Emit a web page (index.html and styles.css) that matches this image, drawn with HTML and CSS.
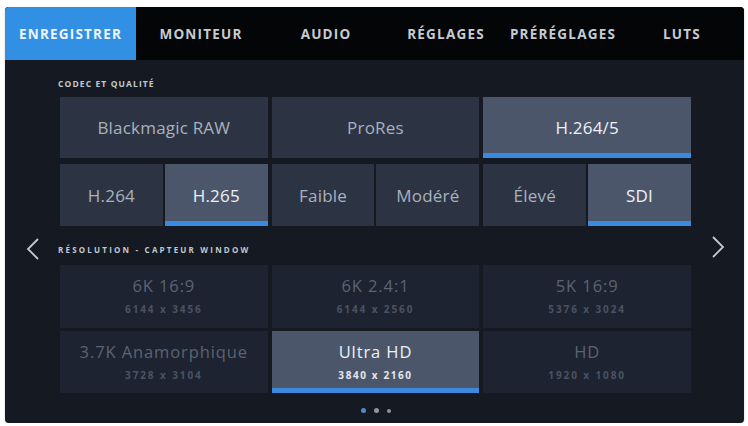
FILE: index.html
```html
<!DOCTYPE html>
<html lang="fr">
<head>
<meta charset="utf-8">
<title>Enregistrer</title>
<link rel="stylesheet" href="styles.css">
</head>
<body>
<div class="screen">
  <nav class="tabs">
    <div class="tab active w1">ENREGISTRER</div>
    <div class="tab w2">MONITEUR</div>
    <div class="tab w3">AUDIO</div>
    <div class="tab w4">RÉGLAGES</div>
    <div class="tab w5">PRÉRÉGLAGES</div>
    <div class="tab w6">LUTS</div>
  </nav>
  <div class="body">
    <div class="side side-left">
      <svg class="chev" width="16" height="22" viewBox="0 0 16 22"><polyline points="13,1 3,11 13,21" fill="none" stroke="#c4c9d0" stroke-width="1.8"/></svg>
    </div>
    <main class="main">
      <div class="label">CODEC ET QUALITÉ</div>
      <div class="row3 codec">
        <div class="btn">Blackmagic RAW</div>
        <div class="btn">ProRes</div>
        <div class="btn sel">H.264/5</div>
      </div>
      <div class="row3 opts">
        <div class="pair"><div class="btn">H.264</div><div class="btn sel">H.265</div></div>
        <div class="pair"><div class="btn">Faible</div><div class="btn">Modéré</div></div>
        <div class="pair"><div class="btn">Élevé</div><div class="btn sel">SDI</div></div>
      </div>
      <div class="label label2">RÉSOLUTION - CAPTEUR WINDOW</div>
      <div class="res-grid">
        <div class="res"><span class="rt">6K 16:9</span><span class="rs">6144 x 3456</span></div>
        <div class="res"><span class="rt">6K 2.4:1</span><span class="rs">6144 x 2560</span></div>
        <div class="res"><span class="rt">5K 16:9</span><span class="rs">5376 x 3024</span></div>
        <div class="res"><span class="rt">3.7K Anamorphique</span><span class="rs">3728 x 3104</span></div>
        <div class="res sel"><span class="rt">Ultra HD</span><span class="rs">3840 x 2160</span></div>
        <div class="res"><span class="rt">HD</span><span class="rs">1920 x 1080</span></div>
      </div>
      <div class="dots">
        <span class="dot on"></span><span class="dot"></span><span class="dot small"></span>
      </div>
    </main>
    <div class="side side-right">
      <svg class="chev" width="16" height="22" viewBox="0 0 16 22"><polyline points="3,1 13,11 3,21" fill="none" stroke="#c4c9d0" stroke-width="1.8"/></svg>
    </div>
  </div>
</div>
</body>
</html>
```
FILE: styles.css
```css
html, body {
  margin: 0;
  padding: 0;
  background: #ffffff;
}
body {
  font-family: "Open Sans", "Noto Sans", "DejaVu Sans", sans-serif;
}
.screen {
  margin: 7px 0 0 5px;
  width: 739px;
  height: 416px;
  background: #141922;
  border-radius: 4px;
  overflow: hidden;
  box-shadow: 0 1px 2px rgba(0,0,0,0.25);
  display: flex;
  flex-direction: column;
}
.tabs {
  height: 53px;
  flex: none;
  display: flex;
  background: #040507;
}
.tab {
  display: flex;
  align-items: center;
  justify-content: center;
  font-weight: 700;
  font-size: 13.5px;
  letter-spacing: 1.2px;
  color: #c6cbd2;
}
.tab.active {
  background: #3290e4;
  color: #eef5fc;
}
.w1 { width: 131px; }
.w2 { width: 130px; }
.w3 { width: 120px; }
.w4 { width: 120px; }
.w5 { width: 114px; }
.w6 { flex: 1; }

.body {
  flex: 1;
  display: flex;
}
.side {
  display: flex;
  justify-content: center;
  padding-top: 178px;
}
.side-left { width: 55px; }
.side-right { width: 53px; padding-top: 176px; }
.chev { display: block; }

.main {
  width: 631px;
  padding-top: 18px;
  display: flex;
  flex-direction: column;
}
.label {
  height: 12px;
  line-height: 12px;
  font-size: 8.5px;
  font-weight: 700;
  letter-spacing: 1.1px;
  color: #c3c8cf;
  margin: 0 0 7px -2px;
}
.label2 {
  margin-top: 18px;
  margin-bottom: 9px;
  font-size: 8px;
  letter-spacing: 2.2px;
}
.row3 {
  display: grid;
  grid-template-columns: repeat(3, 1fr);
  gap: 4px;
}
.codec { height: 61px; }
.opts { height: 62px; margin-top: 6px; }
.pair {
  display: grid;
  grid-template-columns: 1fr 1fr;
  gap: 2px;
}
.btn {
  display: flex;
  align-items: center;
  justify-content: center;
  background: #2c3444;
  color: #a9b1bc;
  font-size: 17px;
  letter-spacing: 0.2px;
}
.btn.sel {
  background: #4b566b;
  color: #eef1f5;
  box-shadow: inset 0 -5px 0 #3a8ae2;
}

.res-grid {
  display: grid;
  grid-template-columns: repeat(3, 1fr);
  grid-template-rows: 63px 62px;
  column-gap: 4px;
  row-gap: 3px;
}
.res {
  background: #1d2330;
  display: flex;
  flex-direction: column;
  align-items: center;
  padding-top: 10px;
  box-sizing: border-box;
}
.rt {
  font-size: 16.5px;
  line-height: 22px;
  color: #5b6474;
  letter-spacing: 0.9px;
}
.rs {
  font-size: 10px;
  line-height: 14px;
  margin-top: 5px;
  font-weight: 700;
  color: #4a5362;
  letter-spacing: 1.9px;
}
.res.sel {
  background: #4b566b;
  box-shadow: inset 0 -5px 0 #3a8ae2;
}
.res.sel .rt { color: #eef1f5; }
.res.sel .rs { color: #e3e7ec; letter-spacing: 1.6px; }

.dots {
  display: flex;
  justify-content: center;
  align-items: center;
  gap: 8px;
  margin-top: 15px;
}
.dot {
  width: 5px;
  height: 5px;
  border-radius: 50%;
  background: #8d95a1;
}
.dot.on { background: #4f88cc; }
.dot.small { width: 4px; height: 4px; }
```
